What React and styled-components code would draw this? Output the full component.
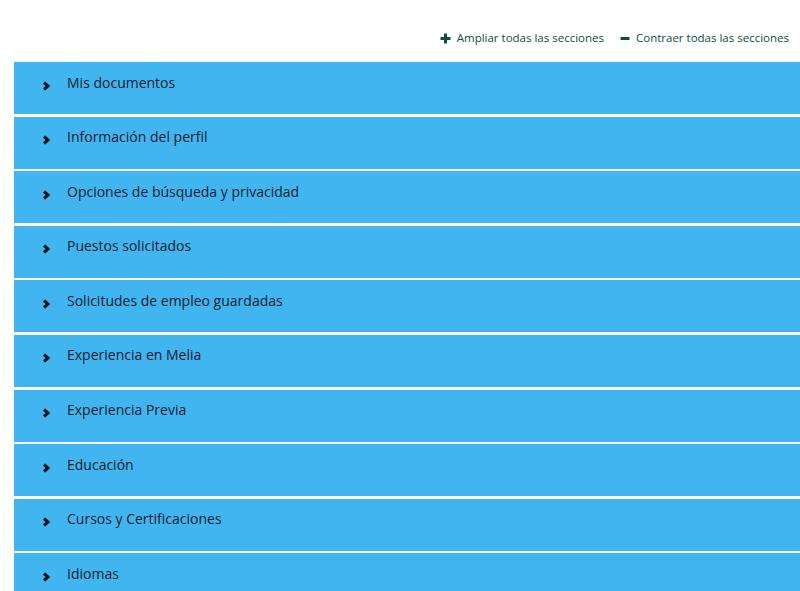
import React from "react";
import styled, { createGlobalStyle } from "styled-components";

const GlobalStyle = createGlobalStyle`
  body {
    margin: 0;
    background: #ffffff;
    font-family: "Open Sans", "Noto Sans", Arial, sans-serif;
  }
`;

const Page = styled.div`
  width: 800px;
  height: 591px;
  overflow: hidden;
  padding-left: 14px;
  box-sizing: border-box;
`;

const Toolbar = styled.div`
  display: flex;
  justify-content: flex-end;
  align-items: flex-start;
  gap: 16px;
  height: 62px;
  padding: 29px 11px 0 0;
  box-sizing: border-box;
`;

const ToolLink = styled.a`
  display: flex;
  align-items: center;
  gap: 6px;
  font-size: 11.5px;
  line-height: 18px;
  color: #0e4f42;
  text-decoration: none;
  cursor: pointer;
`;

const List = styled.div`
  display: flex;
  flex-direction: column;
  gap: 2.6px;
`;

const Section = styled.div`
  height: 52px;
  background: #41b5ef;
  display: flex;
  align-items: center;
  padding: 0 0 12px 28px;
  box-sizing: border-box;
  gap: 17px;
  font-size: 14px;
  color: #13202e;
  cursor: pointer;
`;

const ChevronBox = styled.span`
  display: flex;
  margin-top: 7px;
`;

const Chevron = () => (
  <ChevronBox>
    <svg width="8" height="10" viewBox="0 0 8 10">
      <polyline
        points="2,1.5 6,5 2,8.5"
        fill="none"
        stroke="#0d1620"
        strokeWidth="3"
        strokeLinejoin="miter"
      />
    </svg>
  </ChevronBox>
);

const Plus = () => (
  <svg width="11" height="11" viewBox="0 0 11 11">
    <rect x="4" y="0.5" width="3" height="10" fill="#0e4f42" />
    <rect x="0.5" y="4" width="10" height="3" fill="#0e4f42" />
  </svg>
);

const Minus = () => (
  <svg width="10" height="11" viewBox="0 0 10 11">
    <rect x="0.5" y="4" width="9" height="3" fill="#0e4f42" />
  </svg>
);

const sections = [
  "Mis documentos",
  "Información del perfil",
  "Opciones de búsqueda y privacidad",
  "Puestos solicitados",
  "Solicitudes de empleo guardadas",
  "Experiencia en Melia",
  "Experiencia Previa",
  "Educación",
  "Cursos y Certificaciones",
  "Idiomas",
];

export default function App() {
  return (
    <>
      <GlobalStyle />
      <Page>
        <Toolbar>
          <ToolLink>
            <Plus />
            Ampliar todas las secciones
          </ToolLink>
          <ToolLink>
            <Minus />
            Contraer todas las secciones
          </ToolLink>
        </Toolbar>
        <List>
          {sections.map((s) => (
            <Section key={s}>
              <Chevron />
              {s}
            </Section>
          ))}
        </List>
      </Page>
    </>
  );
}
